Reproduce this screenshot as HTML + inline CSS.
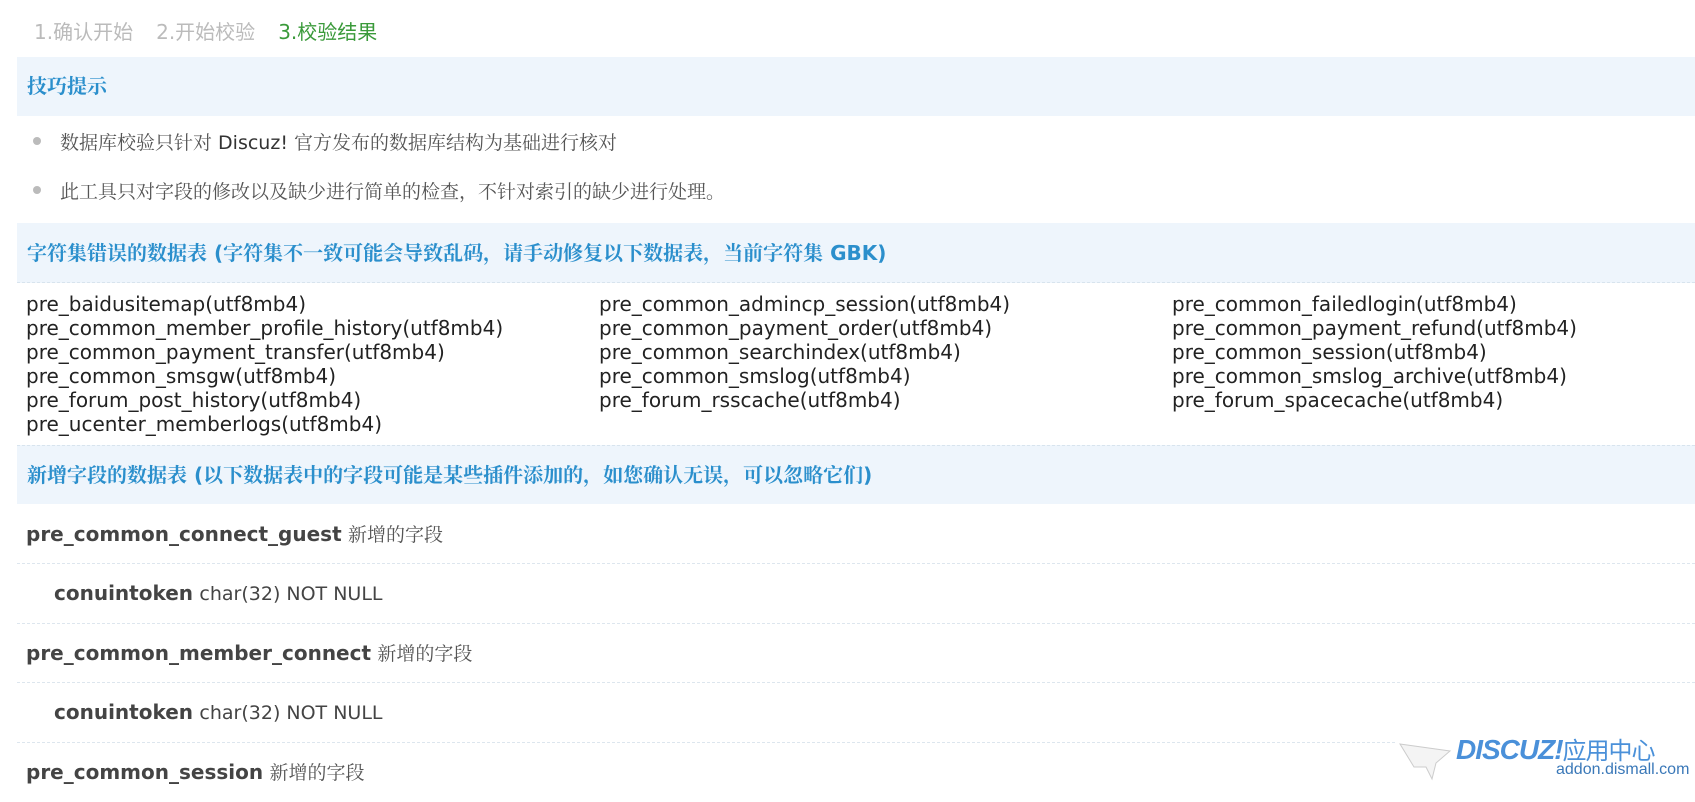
<!DOCTYPE html>
<html><head><meta charset="utf-8"><style>
body{margin:0;background:#fff;width:1695px;height:796px;overflow:hidden;font-family:"DejaVu Sans","Noto Sans CJK SC",sans-serif;color:#333}
.steps{position:absolute;left:34px;top:16px;font-size:20px;color:#bbb}
.steps span{margin-right:23px}
.band{position:absolute;left:17px;right:0;background:#eef5fc;color:#2b8fcc;font-weight:bold;font-size:20px;padding-left:10px;box-sizing:border-box;font-family:"DejaVu Sans","Noto Serif CJK SC",serif}
.li{position:absolute;left:60px;font-size:19px;color:#555;font-family:"DejaVu Sans","Noto Serif CJK SC",serif}
.li:before{content:"";position:absolute;left:-27px;top:9px;width:8px;height:8px;border-radius:50%;background:#bbb}
.grid{position:absolute;left:26px;top:292px;font-size:20px;color:#222;line-height:24px}
.grid div{display:flex}.grid span{width:573px;white-space:nowrap}
.row{position:absolute;left:17px;right:0;height:59px;border-bottom:1px dashed #dde6ee;font-size:20px;line-height:59px;padding-left:9px;color:#444}
.row b{color:#444}
.row .c{font-size:19px;color:#555;font-family:"Noto Serif CJK SC",serif}
</style></head><body>
<div class="steps"><span>1.确认开始</span><span>2.开始校验</span><span style="color:#3a9a3a">3.校验结果</span></div>
<div class="band" style="top:57px;height:59px;line-height:59px">技巧提示</div>
<div class="li" style="top:128px">数据库校验只针对 <span style="color:#333">Discuz!</span> 官方发布的数据库结构为基础进行核对</div>
<div class="li" style="top:177px">此工具只对字段的修改以及缺少进行简单的检查，不针对索引的缺少进行处理。</div>
<div class="band" style="top:223px;height:60px;line-height:60px;border-bottom:1px dashed #d8e4ee">字符集错误的数据表 (字符集不一致可能会导致乱码，请手动修复以下数据表，当前字符集 GBK)</div>
<div class="grid">
<div><span>pre_baidusitemap(utf8mb4)</span><span>pre_common_admincp_session(utf8mb4)</span><span>pre_common_failedlogin(utf8mb4)</span></div>
<div><span>pre_common_member_profile_history(utf8mb4)</span><span>pre_common_payment_order(utf8mb4)</span><span>pre_common_payment_refund(utf8mb4)</span></div>
<div><span>pre_common_payment_transfer(utf8mb4)</span><span>pre_common_searchindex(utf8mb4)</span><span>pre_common_session(utf8mb4)</span></div>
<div><span>pre_common_smsgw(utf8mb4)</span><span>pre_common_smslog(utf8mb4)</span><span>pre_common_smslog_archive(utf8mb4)</span></div>
<div><span>pre_forum_post_history(utf8mb4)</span><span>pre_forum_rsscache(utf8mb4)</span><span>pre_forum_spacecache(utf8mb4)</span></div>
<div><span>pre_ucenter_memberlogs(utf8mb4)</span></div>
</div>
<div class="band" style="top:445px;height:59px;line-height:59px;border-top:1px dashed #d8e4ee">新增字段的数据表 (以下数据表中的字段可能是某些插件添加的，如您确认无误，可以忽略它们)</div>
<div class="row" style="top:504px"><b>pre_common_connect_guest</b> <span class="c">新增的字段</span></div>
<div class="row" style="top:564px;padding-left:37px"><b>conuintoken</b> <span style="font-size:19px">char(32) NOT NULL</span></div>
<div class="row" style="top:623px"><b>pre_common_member_connect</b> <span class="c">新增的字段</span></div>
<div class="row" style="top:683px;padding-left:37px"><b>conuintoken</b> <span style="font-size:19px">char(32) NOT NULL</span></div>
<div class="row" style="top:742px;border:0"><b>pre_common_session</b> <span class="c">新增的字段</span></div>
<div style="position:absolute;left:1395px;top:735px;width:300px;height:61px;background:#fff"></div>
<svg style="position:absolute;left:1398px;top:737px" width="60" height="45"><path d="M2 7 L52 14 L38 26 L34 42 L28 30 L16 30 Z" fill="#f4f4f4" stroke="#ccc"/></svg>
<div style="position:absolute;left:1456px;top:731px;font-size:28px;font-weight:bold;font-style:italic;color:#4a90d9;letter-spacing:-1px;font-family:'Liberation Sans',sans-serif">DISCUZ!<span style="font-style:normal;font-weight:normal;font-size:24px;font-family:'Noto Sans CJK SC',sans-serif">应用中心</span></div>
<div style="position:absolute;left:1556px;top:761px;font-size:16px;color:#3a78b8;font-family:'Liberation Sans',sans-serif">addon.dismall.com</div>
</body></html>
